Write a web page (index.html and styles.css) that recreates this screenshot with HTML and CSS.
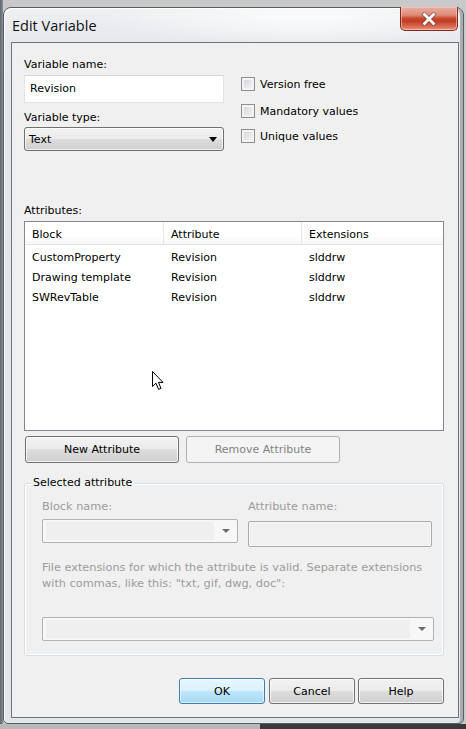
FILE: index.html
```html
<!DOCTYPE html>
<html>
<head>
<meta charset="utf-8">
<link rel="stylesheet" href="styles.css">
</head>
<body>
<div class="window">
  <div class="titlebar">
    <span class="title">Edit Variable</span>
    <div class="close">
      <svg width="18" height="14" viewBox="0 0 18 14">
        <path d="M4.5 2.5 L13.5 11.5 M13.5 2.5 L4.5 11.5" stroke="#5b2a22" stroke-width="4.4" stroke-linecap="square" fill="none" opacity="0.5"/>
        <path d="M4.5 2.5 L13.5 11.5 M13.5 2.5 L4.5 11.5" stroke="#ffffff" stroke-width="2.8" stroke-linecap="square" fill="none"/>
      </svg>
    </div>
  </div>
  <div class="client">
    <div class="top">
      <div class="col-left">
        <div class="label">Variable name:</div>
        <div class="textbox">Revision</div>
        <div class="label label-type">Variable type:</div>
        <div class="combo"><span>Text</span><span class="arrow"></span></div>
      </div>
      <div class="col-right">
        <div class="check check-1"><span class="box"></span><span>Version free</span></div>
        <div class="check check-2"><span class="box"></span><span>Mandatory values</span></div>
        <div class="check check-3"><span class="box"></span><span>Unique values</span></div>
      </div>
    </div>
    <div class="label attr-label">Attributes:</div>
    <div class="list">
      <div class="list-head">
        <div class="hcell col-a">Block</div>
        <div class="hcell col-b">Attribute</div>
        <div class="hcell col-c">Extensions</div>
      </div>
      <div class="rows">
        <div class="row"><div class="cell col-a">CustomProperty</div><div class="cell col-b">Revision</div><div class="cell col-c">slddrw</div></div>
        <div class="row"><div class="cell col-a">Drawing template</div><div class="cell col-b">Revision</div><div class="cell col-c">slddrw</div></div>
        <div class="row"><div class="cell col-a">SWRevTable</div><div class="cell col-b">Revision</div><div class="cell col-c">slddrw</div></div>
      </div>
      <svg class="cursor" width="13" height="20" viewBox="0 0 13 20">
        <path d="M0.5 0.5 L0.5 15.5 L4 12.2 L6.6 18.4 L9 17.4 L6.5 11.4 L11 11.4 Z" fill="#ffffff" stroke="#000000" stroke-width="1" stroke-linejoin="miter"/>
      </svg>
    </div>
    <div class="btnrow">
      <div class="btn btn-new">New Attribute</div>
      <div class="btn btn-disabled btn-remove">Remove Attribute</div>
    </div>
    <fieldset class="group">
      <legend>Selected attribute</legend>
      <div class="grid2">
        <div class="gcol gcol-a">
          <div class="dlabel">Block name:</div>
          <div class="dcombo dcombo-block"><span class="dfield"></span><span class="darrow"></span></div>
        </div>
        <div class="gcol gcol-b">
          <div class="dlabel">Attribute name:</div>
          <div class="dtextbox"></div>
        </div>
      </div>
      <div class="dtext">File extensions for which the attribute is valid. Separate extensions<br>with commas, like this: "txt, gif, dwg, doc":</div>
      <div class="dcombo dcombo-ext"><span class="dfield"></span><span class="darrow"></span></div>
    </fieldset>
    <div class="footer">
      <div class="btn btn-ok">OK</div>
      <div class="btn btn-cancel">Cancel</div>
      <div class="btn btn-help">Help</div>
    </div>
  </div>
</div>
<div class="desk-bottom"><span class="desk-light"></span><span class="desk-dark"></span></div>
</body>
</html>
```
FILE: styles.css
```css
* { box-sizing: border-box; }
html, body { margin: 0; padding: 0; }
body {
  width: 466px;
  height: 729px;
  overflow: hidden;
  background: linear-gradient(to right, #5d6670 0, #8a9098 3px, #c9c9c9 3px, #c9c9c9 100%);
  font-family: "DejaVu Sans", sans-serif;
  font-size: 11px;
  color: #000;
  position: relative;
}
.window {
  margin: 7px 0 0 3px;
  width: 461px;
  height: 717px;
  border: 1px solid #5a5e63;
  border-radius: 8px 8px 5px 5px;
  background:
    radial-gradient(ellipse 200px 30px at 300px 10px, rgba(255,255,255,0.8), rgba(255,255,255,0) 100%),
    linear-gradient(to bottom, #eef0f3 0, #e4e7eb 40px, #e2e5e9 100%);
  box-shadow: inset 1px 1px 0 #ffffff, inset -3px 0 0 #a9adb2;
  padding: 0 4px 5px 7px;
  display: flex;
  flex-direction: column;
}
.titlebar {
  height: 34px;
  display: flex;
  align-items: flex-start;
  justify-content: space-between;
}
.title {
  font-family: "Open Sans", "Noto Sans", sans-serif;
  font-size: 14.5px;
  color: #111;
  margin: 8px 0 0 1px;
}
.close {
  width: 58px;
  height: 24px;
  margin: -1px 1px 0 0;
  border: 1px solid #7e2b1d;
  border-top: none;
  border-radius: 0 0 5px 5px;
  background: linear-gradient(to bottom, #eab1a4 0%, #de8a77 35%, #c8472e 50%, #c33d24 62%, #d9735a 88%, #e79c84 100%);
  box-shadow: inset 0 0 0 1px rgba(255,210,200,0.55);
  display: flex;
  align-items: center;
  justify-content: center;
}
.close svg { display: block; margin-top: 0; }
.client {
  width: 448px;
  height: 676px;
  border: 1px solid #6e7378;
  background: #f0f0f0;
  padding: 0 14px 0 12px;
  position: relative;
}
.top { display: flex; }
.col-left { width: 200px; padding-top: 15px; }
.col-right { margin-left: 17px; }
.label { height: 14px; line-height: 14px; white-space: nowrap; }
.textbox {
  margin-top: 3px;
  height: 28px;
  background: #fff;
  border: 1px solid #e2e3e6;
  border-top-color: #d4d6da;
  padding-left: 5px;
  line-height: 26px;
}
.label-type { margin-top: 8px; }
.combo {
  margin-top: 2px;
  height: 24px;
  border: 1px solid #707070;
  border-radius: 3px;
  background: linear-gradient(to bottom, #f2f2f2 0, #ebebeb 50%, #dddddd 50%, #cfcfcf 100%);
  box-shadow: inset 0 0 0 1px rgba(255,255,255,0.7);
  display: flex;
  align-items: center;
  justify-content: space-between;
  padding: 0 6px 0 4px;
}
.arrow {
  width: 0; height: 0;
  border-left: 4px solid transparent;
  border-right: 4px solid transparent;
  border-top: 5px solid #000;
}
.check { display: flex; align-items: center; height: 20px; white-space: nowrap; }
.check-1 { margin-top: 31px; }
.check-2 { margin-top: 7px; }
.check-3 { margin-top: 5px; }
.box {
  width: 14px; height: 14px;
  border: 1px solid #8e8f8f;
  background: linear-gradient(135deg, #cfd2d6 0%, #e8e9eb 60%, #f7f7f7 100%);
  box-shadow: inset 0 0 0 2px #f3f3f3;
  margin-right: 5px;
  flex: none;
}
.attr-label { margin-top: 53px; }
.list {
  margin-top: 3px;
  height: 210px;
  border: 1px solid #828790;
  background: #fff;
  position: relative;
}
.list-head {
  display: flex;
  height: 23px;
  border-bottom: 1px solid #e5e5e5;
  background: linear-gradient(to bottom, #ffffff 0, #ffffff 60%, #f6f7f9 100%);
}
.hcell {
  line-height: 14px;
  padding: 6px 0 0 7px;
  border-right: 1px solid #e5e5e5;
}
.hcell.col-c { border-right: none; }
.col-a { width: 139px; }
.col-b { width: 138px; }
.col-c { flex: 1; }
.rows { padding-top: 3px; }
.row { display: flex; height: 20px; line-height: 20px; }
.cell { padding-left: 7px; white-space: nowrap; }
.row .col-a { width: 139px; }
.row .col-b { width: 138px; }
.cursor { position: absolute; left: 127px; top: 149px; }
.btnrow { display: flex; margin-top: 5px; }
.btn {
  height: 27px;
  border: 1px solid #707070;
  border-radius: 3px;
  background: linear-gradient(to bottom, #f2f2f2 0, #ebebeb 50%, #dddddd 50%, #cfcfcf 100%);
  box-shadow: inset 0 0 0 1px rgba(255,255,255,0.75);
  display: flex;
  align-items: center;
  justify-content: center;
  white-space: nowrap;
}
.btn-new { width: 154px; margin-left: 1px; }
.btn-remove { width: 154px; margin-left: 7px; }
.btn-disabled {
  border-color: #adb2b5;
  background: #f4f4f4;
  box-shadow: none;
  color: #838383;
}
.group {
  margin: 13px 0 0 0;
  padding: 0 9px 14px 17px;
  border: 1px solid #d5dfe5;
  border-radius: 3px;
  box-shadow: inset 0 0 0 1px #ffffff;
  min-width: 0;
  height: 180px;
}
.group legend {
  padding: 0 2px;
  margin-left: -11px;
  line-height: 14px;
  height: 14px;
}
.grid2 { display: flex; margin-top: 10px; }
.gcol-a { width: 196px; }
.gcol-b { margin-left: 10px; width: 184px; }
.dlabel {
  color: #9c9c9c;
  font-size: 11.3px;
  height: 14px;
  line-height: 14px;
  white-space: nowrap;
}
.dcombo {
  height: 24px;
  border: 1px solid #b2b2b2;
  border-radius: 2px;
  background: #f7f7f7;
  display: flex;
  align-items: center;
  padding: 2px 0 2px 3px;
}
.dcombo-block { margin-top: 5px; }
.dfield { flex: 1; height: 18px; background: #efefef; }
.darrow {
  width: 0; height: 0;
  margin: 0 7px 0 8px;
  border-left: 4px solid transparent;
  border-right: 4px solid transparent;
  border-top: 4px solid #6d6d6d;
}
.dcombo-ext { margin-top: 25px; width: 392px; }
.dtextbox {
  margin-top: 7px;
  height: 26px;
  border: 1px solid #ababab;
  border-radius: 2px;
  background: #f0f0f0;
  box-shadow: inset 0 0 0 1px #f6f6f6;
}
.dtext {
  margin-top: 13px;
  color: #9c9c9c;
  font-size: 11.3px;
  line-height: 16px;
  white-space: nowrap;
}
.footer {
  display: flex;
  justify-content: flex-end;
  margin-top: 22px;
}
.footer .btn { width: 86px; height: 26px; }
.btn-cancel { margin-left: 4px; }
.btn-help { margin-left: 3px; }
.btn-ok {
  border-color: #3c7fb1;
  background: linear-gradient(to bottom, #eaf6fd 0, #d9f0fc 50%, #bee6fd 50%, #a7d9f5 100%);
  box-shadow: inset 0 0 0 1px rgba(255,255,255,0.6);
}
.desk-bottom {
  display: flex;
  height: 5px;
}
.desk-light { width: 260px; background: #b8b8b8; }
.desk-dark { flex: 1; background: #3a3a3a; }
```
